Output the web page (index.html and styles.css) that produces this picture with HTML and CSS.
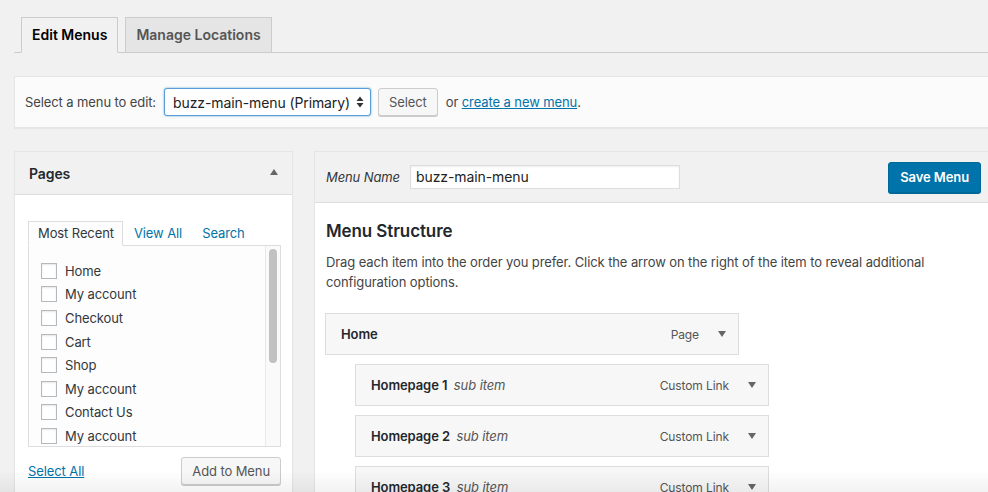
FILE: index.html
```html
<!DOCTYPE html>
<html>
<head>
<meta charset="utf-8">
<link rel="stylesheet" href="styles.css">
</head>
<body>
<div class="wrap">
  <div class="tabs">
    <span class="tab active">Edit Menus</span>
    <span class="tab">Manage Locations</span>
  </div>
  <div class="manage">
    <span class="lbl">Select a menu to edit:</span>
    <div class="select">
      <span>buzz-main-menu (Primary)</span>
      <svg class="updown" width="8" height="12" viewBox="0 0 8 12"><path d="M4 0.5 L7.5 5 L0.5 5 Z M0.5 7 L7.5 7 L4 11.5 Z" fill="#333"/></svg>
    </div>
    <span class="btn">Select</span>
    <span class="or">or <a href="#">create a new menu</a>.</span>
  </div>
  <div class="cols">
    <div class="side">
      <div class="side-head">
        <h3>Pages</h3>
        <span class="up"></span>
      </div>
      <div class="side-body">
        <div class="subtabs">
          <span class="subtab active">Most Recent</span>
          <span class="subtab">View All</span>
          <span class="subtab">Search</span>
        </div>
        <div class="panel">
          <ul class="checks">
            <li><span class="cb"></span>Home</li>
            <li><span class="cb"></span>My account</li>
            <li><span class="cb"></span>Checkout</li>
            <li><span class="cb"></span>Cart</li>
            <li><span class="cb"></span>Shop</li>
            <li><span class="cb"></span>My account</li>
            <li><span class="cb"></span>Contact Us</li>
            <li><span class="cb"></span>My account</li>
          </ul>
          <div class="scroll"><div class="thumb"></div></div>
        </div>
        <div class="side-foot">
          <a href="#">Select All</a>
          <span class="btn add">Add to Menu</span>
        </div>
      </div>
    </div>
    <div class="main">
      <div class="main-head">
        <label>Menu Name</label>
        <div class="input">buzz-main-menu</div>
        <span class="save">Save Menu</span>
      </div>
      <div class="main-body">
        <h3>Menu Structure</h3>
        <p>Drag each item into the order you prefer. Click the arrow on the right of the item to reveal additional configuration options.</p>
        <div class="items">
          <div class="item">
            <span class="title"><b>Home</b></span>
            <span class="type">Page</span><span class="down"></span>
          </div>
          <div class="item sub">
            <span class="title"><b>Homepage 1</b> <i>sub item</i></span>
            <span class="type">Custom Link</span><span class="down"></span>
          </div>
          <div class="item sub">
            <span class="title"><b>Homepage 2</b> <i>sub item</i></span>
            <span class="type">Custom Link</span><span class="down"></span>
          </div>
          <div class="item sub">
            <span class="title"><b>Homepage 3</b> <i>sub item</i></span>
            <span class="type">Custom Link</span><span class="down"></span>
          </div>
        </div>
      </div>
    </div>
  </div>
</div>
<div class="fade"></div>
</body>
</html>
```

FILE: styles.css
```css
* { box-sizing: border-box; }
html, body { margin: 0; height: 100%; overflow: hidden; }
body {
  background: #f1f1f1;
  font-family: Inter, "Liberation Sans", Arial, sans-serif;
  font-size: 13px;
  letter-spacing: -0.1px;
  color: #23282d;
}
a { color: #0073aa; text-decoration: underline; }
.wrap { padding: 17px 0 0 14px; }

.tabs {
  display: flex;
  gap: 7px;
  padding-left: 7px;
  border-bottom: 1px solid #ccc;
  height: 36px;
}
.tab {
  display: block;
  height: 36px;
  padding: 0 10px;
  border: 1px solid #ccc;
  background: #e5e5e5;
  font-size: 14px;
  font-weight: 600;
  letter-spacing: 0;
  line-height: 34px;
  color: #555;
}
.tab.active {
  background: #f1f1f1;
  border-bottom-color: #f1f1f1;
  color: #000;
}

.manage {
  margin-top: 23px;
  height: 52px;
  background: #fbfbfb;
  border: 1px solid #e5e5e5;
  border-right: none;
  box-shadow: 0 1px 1px rgba(0,0,0,.04);
  display: flex;
  align-items: center;
  padding-left: 10px;
  color: #444;
}
.lbl { margin-right: 8px; }
.select {
  width: 207px;
  height: 28px;
  border: 1px solid #5b9dd9;
  border-radius: 3px;
  box-shadow: 0 0 2px rgba(30,140,190,.8);
  background: #fff;
  display: flex;
  align-items: center;
  justify-content: space-between;
  padding: 0 6px 0 8px;
  font-size: 14px;
  color: #222;
}
.btn {
  display: inline-block;
  height: 28px;
  line-height: 26px;
  padding: 0 10px;
  border: 1px solid #ccc;
  border-radius: 3px;
  background: #f7f7f7;
  box-shadow: 0 1px 0 #ccc;
  color: #555;
  font-size: 13px;
}
.manage .btn { margin-left: 7px; }
.or { margin-left: 8px; }

.cols {
  display: flex;
  gap: 21px;
  margin-top: 23px;
  align-items: flex-start;
}
.side {
  width: 279px;
  flex: none;
  border: 1px solid #e5e5e5;
  background: #fff;
  box-shadow: 0 1px 1px rgba(0,0,0,.04);
}
.side-head {
  height: 43px;
  background: #f1f1f1;
  border-bottom: 1px solid #ddd;
  display: flex;
  align-items: center;
  justify-content: space-between;
  padding: 0 14px 0 14px;
}
.side-head h3 { margin: 0; font-size: 14px; font-weight: 600; color: #23282d; }
.up {
  width: 0; height: 0;
  border-left: 4px solid transparent;
  border-right: 4px solid transparent;
  border-bottom: 6px solid #666;
  margin-top: -2px;
}
.side-body { padding: 26px 11px 7px 13px; }
.subtabs { display: flex; height: 24px; position: relative; z-index: 1; }
.subtab {
  padding: 0 8px 0 9px;
  line-height: 22px;
  color: #0073aa;
  border: 1px solid transparent;
  margin-right: 1px;
}
.subtab.active {
  color: #32373c;
  background: #fdfdfd;
  border-color: #ddd;
  border-bottom-color: #fdfdfd;
  height: 25px;
}
.panel {
  height: 202px;
  border: 1px solid #ddd;
  background: #fdfdfd;
  display: flex;
  justify-content: space-between;
}
.checks { list-style: none; margin: 0; padding: 13px 0 0 12px; }
.checks li {
  display: flex;
  align-items: center;
  height: 23.6px;
  color: #32373c;
}
.cb {
  width: 16px; height: 16px;
  border: 1px solid #b4b9be;
  background: #fff;
  box-shadow: inset 0 1px 2px rgba(0,0,0,.1);
  margin-right: 8px;
}
.scroll {
  width: 15px;
  border-left: 1px solid #e8e8e8;
  background: #fafafa;
  padding: 3px 3px 0 3px;
}
.thumb { height: 114px; background: #c1c1c1; border-radius: 4px; }
.side-foot {
  display: flex;
  justify-content: space-between;
  align-items: center;
  margin-top: 10px;
}
.side-foot .btn { padding: 0 10px; }

.main {
  flex: 1;
  border: 1px solid #e5e5e5;
  border-right: none;
  background: #fff;
  box-shadow: 0 1px 1px rgba(0,0,0,.04);
}
.main-head {
  height: 51px;
  background: #f1f1f1;
  border-bottom: 1px solid #ddd;
  display: flex;
  align-items: center;
  padding: 0 7px 0 11px;
}
.main-head label { font-style: italic; color: #32373c; width: 84px; }
.input {
  width: 270px;
  height: 24px;
  border: 1px solid #ddd;
  background: #fff;
  box-shadow: inset 0 1px 2px rgba(0,0,0,.07);
  font-size: 14px;
  line-height: 22px;
  padding: 0 5px;
  color: #222;
}
.save {
  margin-left: auto;
  height: 31px;
  line-height: 29px;
  padding: 0 11px;
  background: #0073aa;
  border: 1px solid #006799;
  border-radius: 3px;
  box-shadow: 0 1px 0 #006799;
  color: #fff;
  font-size: 13px;
  font-weight: 600;
}
.main-body { padding: 16px 0 0 11px; }
.main-body h3 { margin: 0; font-size: 17px; font-weight: 600; line-height: 24px; color: #23282d; }
.main-body p { margin: 9px 0 0; line-height: 20px; color: #444; max-width: 640px; }
.items { display: flex; flex-direction: column; gap: 9px; margin: 21px 0 0 -1px; }
.item {
  width: 414px;
  height: 42px;
  border: 1px solid #ddd;
  background: #f7f7f7;
  display: flex;
  align-items: center;
  padding: 0 12px 0 15px;
  color: #23282d;
}
.item.sub { margin-left: 30px; }
.item b { font-weight: 600; }
.item i { color: #555; margin-left: 3px; }
.title { flex: 1; }
.type { color: #555; margin-right: 19px; font-size: 12px; }
.down {
  width: 0; height: 0;
  border-left: 4px solid transparent;
  border-right: 4px solid transparent;
  border-top: 6px solid #666;
}
.fade {
  position: fixed;
  left: 0; right: 0; bottom: 0;
  height: 22px;
  background: linear-gradient(to bottom, rgba(0,0,0,0), rgba(0,0,0,.05));
  pointer-events: none;
}
```
